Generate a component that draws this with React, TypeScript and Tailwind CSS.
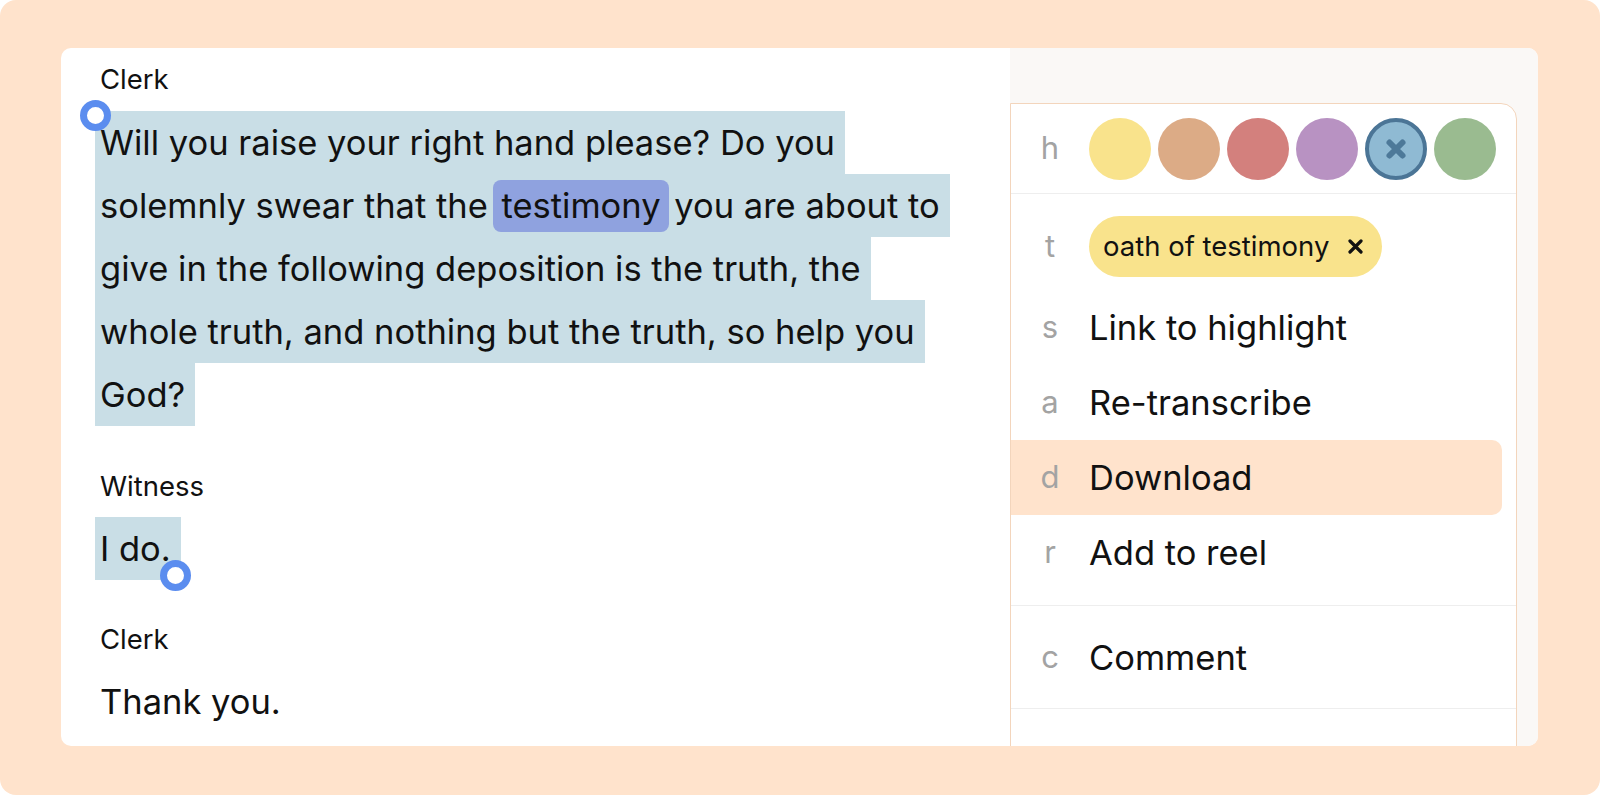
import React from "react";

const font = { fontFamily: "Inter, 'Noto Sans', sans-serif" };

function SelLine({ children, last }: { children: React.ReactNode; last?: boolean }) {
  return (
    <div className="h-[63px] leading-[63px]">
      <span className={`inline-block h-[63px] bg-[#C9DEE6] pl-[5px] ${last ? "pr-[10px]" : "pr-[10px]"}`}>{children}</span>
    </div>
  );
}

const circles = ["#F9E38C", "#DCAB86", "#D3807D", "#B892C2", "blue", "#9ABB90"];

function Row({ k, label, active }: { k: string; label: string; active?: boolean }) {
  return (
    <div className={`flex items-center h-[75px] mr-[14px] rounded-r-[10px] ${active ? "bg-[#FFE3CC]" : ""}`}>
      <div className="w-[38px] ml-[20px] text-center text-[31px] text-[#A3A3A3]">{k}</div>
      <div className="ml-[20px] text-[34.5px] text-[#111]">{label}</div>
    </div>
  );
}

export default function App() {
  return (
    <div className="w-[1600px] h-[795px] bg-white overflow-hidden" style={font}>
      <div className="w-full h-full bg-[#FFE3CC] rounded-[16px] pt-[48px] pl-[61px] pr-[62px] pb-[49px]">
        <div className="h-full bg-white rounded-[10px] flex overflow-hidden">
          {/* Left transcript */}
          <div className="w-[949px] relative pl-[34px] pt-[16px] text-[#111]">
            <div className="pl-[5px] text-[27.5px] leading-[30px]">Clerk</div>
            <div className="mt-[17px] text-[34.5px]">
              <SelLine>Will you raise your right hand please? Do you</SelLine>
              <SelLine>
                solemnly swear that the{" "}
                <span className="inline-block leading-[52px] rounded-[8px] bg-[#8FA2DF] px-[8px] mx-[-4px]">testimony</span>{" "}
                you are about to
              </SelLine>
              <SelLine>give in the following deposition is the truth, the</SelLine>
              <SelLine>whole truth, and nothing but the truth, so help you</SelLine>
              <SelLine last>God?</SelLine>
            </div>
            <div className="mt-[45px] pl-[5px] text-[27.5px] leading-[30px]">Witness</div>
            <div className="mt-[16px] text-[34.5px]">
              <SelLine last>I do.</SelLine>
            </div>
            <div className="mt-[44px] pl-[5px] text-[27.5px] leading-[30px]">Clerk</div>
            <div className="mt-[16px] pl-[5px] text-[34.5px] leading-[63px]">Thank you.</div>

            <div className="absolute left-[19px] top-[52px] w-[31px] h-[31px] rounded-full border-[7px] border-[#5B8DEF] bg-white" />
            <div className="absolute left-[99px] top-[512px] w-[31px] h-[31px] rounded-full border-[7px] border-[#5B8DEF] bg-white" />
          </div>

          {/* Right panel */}
          <div className="flex-1 bg-[#FAF8F6] pt-[55px] pr-[21px]">
            <div className="h-[700px] bg-white border border-[#F3D5BC] rounded-tr-[16px]">
              <div className="flex items-center h-[90px] border-b border-[#EEEEEE]">
                <div className="w-[38px] ml-[20px] text-center text-[31px] text-[#A3A3A3]">h</div>
                <div className="ml-[20px] flex gap-[7px]">
                  {circles.map((c, i) =>
                    c === "blue" ? (
                      <div key={i} className="w-[62px] h-[62px] rounded-full bg-[#8FBAD3] border-[4px] border-[#4B7596] flex items-center justify-center">
                        <svg width="26" height="26" viewBox="0 0 26 26">
                          <path d="M6.5 6.5 L19.5 19.5 M19.5 6.5 L6.5 19.5" stroke="#4D7999" strokeWidth="6" strokeLinecap="round" />
                        </svg>
                      </div>
                    ) : (
                      <div key={i} className="w-[62px] h-[62px] rounded-full" style={{ backgroundColor: c }} />
                    )
                  )}
                </div>
              </div>
              <div className="pt-[22px] pb-[15px] border-b border-[#EEEEEE]">
                <div className="flex items-center h-[61px]">
                  <div className="w-[38px] ml-[20px] text-center text-[31px] text-[#A3A3A3]">t</div>
                  <div className="ml-[20px] h-[61px] rounded-full bg-[#F9E38C] flex items-center pl-[14px] pr-[19px]">
                    <span className="text-[27.5px] text-[#111]">oath of testimony</span>
                    <svg className="ml-[19px]" width="15" height="15" viewBox="0 0 15 15">
                      <path d="M2 2 L13 13 M13 2 L2 13" stroke="#111" strokeWidth="3.2" strokeLinecap="round" />
                    </svg>
                  </div>
                </div>
                <div className="mt-[13px]">
                  <Row k="s" label="Link to highlight" />
                  <Row k="a" label="Re-transcribe" />
                  <Row k="d" label="Download" active />
                  <Row k="r" label="Add to reel" />
                </div>
              </div>
              <div className="pt-[14px] pb-[13px] border-b border-[#EEEEEE]">
                <Row k="c" label="Comment" />
              </div>
            </div>
          </div>
        </div>
      </div>
    </div>
  );
}
